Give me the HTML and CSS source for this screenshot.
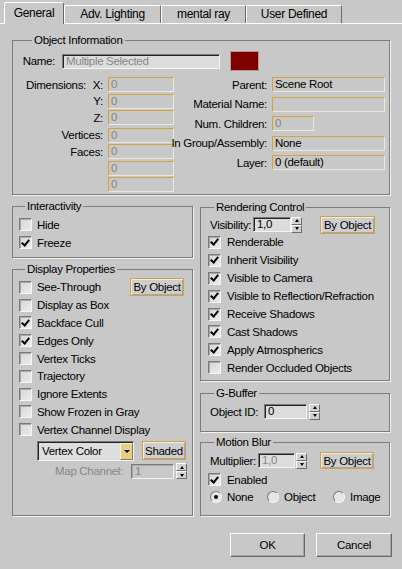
FILE: index.html
```html
<!DOCTYPE html>
<html lang="en">

<head>
    <meta charset="UTF-8">
    <meta name="viewport" content="width=device-width, initial-scale=1.0">
    <title>Object Properties</title>
    <link rel="stylesheet" href="styles.css">
</head>

<body>
    <div class="tabs">
        <div class="tab tab-general active">General</div>
        <div class="tab tab-adv">Adv. Lighting</div>
        <div class="tab tab-mr">mental ray</div>
        <div class="tab tab-user">User Defined</div>
    </div>

    <div class="panel">
        <fieldset class="group info">
            <legend>Object Information</legend>
            <div class="name-row">
                <span class="lbl name-label">Name:</span>
                <div class="field sunken name-field off">Multiple Selected</div>
                <div class="swatch"></div>
            </div>
            <div class="info-cols">
                <div class="dims">
                    <div class="dim-row"><span class="lbl split"><span>Dimensions:</span><span>X:</span></span><span class="field gold off">0</span></div>
                    <div class="dim-row"><span class="lbl">Y:</span><span class="field gold off">0</span></div>
                    <div class="dim-row"><span class="lbl">Z:</span><span class="field gold off">0</span></div>
                    <div class="dim-row sep"><span class="lbl">Vertices:</span><span class="field gold off">0</span></div>
                    <div class="dim-row"><span class="lbl">Faces:</span><span class="field gold off">0</span></div>
                    <div class="dim-row"><span class="lbl"></span><span class="field gold off">0</span></div>
                    <div class="dim-row"><span class="lbl"></span><span class="field gold off">0</span></div>
                </div>
                <div class="links">
                    <div class="link-row"><span class="lbl">Parent:</span><span class="field gold">Scene Root</span></div>
                    <div class="link-row"><span class="lbl">Material Name:</span><span class="field gold"></span></div>
                    <div class="link-row"><span class="lbl">Num. Children:</span><span class="field gold off short">0</span></div>
                    <div class="link-row"><span class="lbl">In Group/Assembly:</span><span class="field gold">None</span></div>
                    <div class="link-row"><span class="lbl">Layer:</span><span class="field gold">0 (default)</span></div>
                </div>
            </div>
        </fieldset>

        <div class="columns">
            <div class="col-left">
                <fieldset class="group interactivity">
                    <legend>Interactivity</legend>
                    <div class="chk-row"><span class="box"></span>Hide</div>
                    <div class="chk-row"><span class="box on"></span>Freeze</div>
                </fieldset>

                <fieldset class="group display">
                    <legend>Display Properties</legend>
                    <div class="chk-row tight"><span class="box"></span>See-Through<span class="btn-gold by-obj">By Object</span></div>
                    <div class="chk-row tight"><span class="box"></span>Display as Box</div>
                    <div class="chk-row tight"><span class="box on"></span>Backface Cull</div>
                    <div class="chk-row tight"><span class="box on"></span>Edges Only</div>
                    <div class="chk-row tight"><span class="box"></span>Vertex Ticks</div>
                    <div class="chk-row tight"><span class="box"></span>Trajectory</div>
                    <div class="chk-row tight"><span class="box"></span>Ignore Extents</div>
                    <div class="chk-row tight"><span class="box"></span>Show Frozen in Gray</div>
                    <div class="chk-row tight"><span class="box"></span>Vertex Channel Display</div>
                    <div class="vc-row">
                        <div class="select"><span>Vertex Color</span><i class="arrow"></i></div>
                        <span class="btn-gold shaded">Shaded</span>
                    </div>
                    <div class="map-row">
                        <span class="off">Map Channel:</span>
                        <span class="field flat off map-field">1</span>
                        <span class="spin"><i class="up"></i><i class="down"></i></span>
                    </div>
                </fieldset>
            </div>

            <div class="col-right">
                <fieldset class="group rendering">
                    <legend>Rendering Control</legend>
                    <div class="vis-row">
                        <span class="lbl vis-lbl">Visibility:</span>
                        <span class="field sunken num vis-field">1,0</span>
                        <span class="spin"><i class="up"></i><i class="down"></i></span>
                        <span class="btn-gold by-obj-r">By Object</span>
                    </div>
                    <div class="chk-row wide"><span class="box on"></span>Renderable</div>
                    <div class="chk-row wide"><span class="box on"></span>Inherit Visibility</div>
                    <div class="chk-row wide"><span class="box on"></span>Visible to Camera</div>
                    <div class="chk-row wide"><span class="box on"></span>Visible to Reflection/Refraction</div>
                    <div class="chk-row wide"><span class="box on"></span>Receive Shadows</div>
                    <div class="chk-row wide"><span class="box on"></span>Cast Shadows</div>
                    <div class="chk-row wide"><span class="box on"></span>Apply Atmospherics</div>
                    <div class="chk-row wide"><span class="box"></span>Render Occluded Objects</div>
                </fieldset>

                <fieldset class="group gbuffer">
                    <legend>G-Buffer</legend>
                    <div class="vis-row">
                        <span class="lbl id-lbl">Object ID:</span>
                        <span class="field sunken num id-field">0</span>
                        <span class="spin"><i class="up"></i><i class="down"></i></span>
                    </div>
                </fieldset>

                <fieldset class="group motion">
                    <legend>Motion Blur</legend>
                    <div class="vis-row mult-row">
                        <span class="lbl mult-lbl">Multiplier:</span>
                        <span class="field sunken num off mult-field">1,0</span>
                        <span class="spin"><i class="up"></i><i class="down"></i></span>
                        <span class="btn-gold by-obj-m">By Object</span>
                    </div>
                    <div class="chk-row wide"><span class="box on"></span>Enabled</div>
                    <div class="radio-row">
                        <span class="opt opt-none"><span class="radio on"></span>None</span>
                        <span class="opt opt-object"><span class="radio"></span>Object</span>
                        <span class="opt"><span class="radio"></span>Image</span>
                    </div>
                </fieldset>
            </div>
        </div>

        <div class="actions">
            <div class="btn ok">OK</div>
            <div class="btn cancel">Cancel</div>
        </div>
    </div>
</body>

</html>
```

FILE: styles.css
```css
* {
    margin: 0;
    padding: 0;
    box-sizing: border-box;
}

body {
    width: 402px;
    height: 569px;
    overflow: hidden;
    background: #c8c8c8;
    color: #000;
    font-family: "Liberation Sans", Arial, sans-serif;
    font-size: 11.5px;
    letter-spacing: -0.3px;
}

/* tab strip */
.tabs {
    display: flex;
    align-items: flex-end;
    height: 24px;
    padding-left: 4px;
    border-bottom: 1px solid #fff;
    font-size: 12px;
}

.tab {
    height: 18px;
    line-height: 16px;
    text-align: center;
    white-space: nowrap;
    border: 1px solid #fff;
    border-right-color: #6a6a6a;
    border-bottom: none;
    border-radius: 2px 2px 0 0;
}

.tab.active {
    height: 22px;
    line-height: 20px;
    margin-bottom: -1px;
    background: #c8c8c8;
}

.tab-general { width: 60px; }
.tab-adv { width: 97px; }
.tab-mr { width: 85px; }
.tab-user { width: 96px; }

.panel {
    padding: 10px 12px 0;
}

/* group boxes */
.group {
    min-width: 0;
    border: 1px solid #7c7c7c;
    box-shadow: 1px 1px 0 #f2f2f2;
}

.group legend {
    margin-left: 6px;
    padding: 0 2px;
    line-height: 13px;
}

.info {
    padding: 4px 3px 0 13px;
}

.name-row {
    display: flex;
    align-items: center;
    height: 20px;
}

.name-label {
    width: 29px;
    margin-right: 7px;
}

.name-field {
    width: 158px;
    height: 20px;
    line-height: 17px;
    padding-left: 4px;
}

.swatch {
    width: 29px;
    height: 20px;
    margin-left: 10px;
    background: #800000;
    border: 1px solid #b39a9a;
}

.info-cols {
    display: grid;
    grid-template-columns: 148px 1fr;
    margin-top: 6px;
}

.dim-row,
.link-row {
    display: flex;
    align-items: center;
    height: 15px;
}

.dim-row {
    margin-bottom: 1.5px;
}

.dim-row.sep {
    margin-top: 2.5px;
}

.link-row {
    margin-bottom: 4.5px;
}

.lbl {
    display: flex;
    justify-content: flex-end;
    white-space: nowrap;
}

.dim-row .lbl {
    width: 77px;
    margin-right: 5px;
}

.lbl.split {
    justify-content: space-between;
}

.link-row .lbl {
    width: 93px;
    margin-right: 5px;
}

/* edit fields */
.field {
    display: block;
    flex: none;
    height: 15px;
    line-height: 13px;
    padding-left: 2px;
    white-space: nowrap;
    overflow: hidden;
}

.dims .field { width: 66px; }
.links .field { width: 113px; }
.links .field.short { width: 42px; }

.gold {
    border: 1px solid;
    border-color: #d7a13c #eee8d8 #eee8d8 #d7a13c;
}

.sunken {
    border: 1px solid;
    border-color: #7a7a7a #f4f4f4 #f4f4f4 #7a7a7a;
    box-shadow: inset 1px 1px 0 #222;
    background: #dcdcdc;
    padding-left: 3px;
}

.flat {
    border: 1px solid;
    border-color: #7a7a7a #f4f4f4 #f4f4f4 #7a7a7a;
    box-shadow: inset 1px 1px 0 #a8a8a8;
    padding-left: 3px;
}

.off {
    color: #878787;
}

/* bottom columns */
.columns {
    display: grid;
    grid-template-columns: 181px 190px;
    column-gap: 7px;
    align-items: start;
    margin-top: 5px;
}

.col-right {
    padding-top: 1px;
}

.interactivity {
    padding: 3px 6px 5px;
}

.display {
    margin-top: 5px;
    padding: 3px 6px 36px;
}

.rendering {
    padding: 2px 7px 3px;
}

.gbuffer {
    margin-top: 6px;
    padding: 3px 7px 10px;
}

.motion {
    margin-top: 4px;
    padding: 2px 7px 10px;
}

/* check boxes */
.chk-row {
    display: flex;
    align-items: center;
    height: 18px;
    white-space: nowrap;
}

.chk-row.tight {
    height: 17.8px;
}

.chk-row.wide {
    height: 17.9px;
}

.box {
    display: flex;
    align-items: center;
    justify-content: center;
    flex: none;
    width: 13px;
    height: 13px;
    margin-right: 5px;
    border: 1px solid;
    border-color: #7a7a7a #f6f6f6 #f6f6f6 #7a7a7a;
    box-shadow: inset 1px 1px 0 #a9a9a9;
    background: linear-gradient(135deg, #d6d6d6, #ececec);
}

.wide .box {
    margin-right: 6px;
}

.box.on::after {
    content: "";
    width: 3px;
    height: 6px;
    margin-top: -2px;
    border: solid #000;
    border-width: 0 2px 2px 0;
    transform: rotate(40deg);
}

/* buttons */
.btn-gold {
    display: flex;
    align-items: center;
    justify-content: center;
    flex: none;
    height: 18px;
    border: 1px solid #d7a13c;
    background: #cecece;
    box-shadow: inset 1px 1px 0 #ececec, inset -1px -1px 0 #a6a6a6;
    white-space: nowrap;
}

.by-obj {
    width: 54px;
    margin-left: auto;
    margin-right: 2px;
}

.vc-row {
    display: flex;
    align-items: center;
    height: 20px;
    margin: 2px 0 0 18px;
}

.select {
    display: flex;
    width: 98px;
    height: 20px;
    border: 1px solid;
    border-color: #7a7a7a #f4f4f4 #f4f4f4 #7a7a7a;
    box-shadow: inset 1px 1px 0 #222;
    background: #dedede;
}

.select span {
    flex: 1;
    padding: 1px 0 0 4px;
    line-height: 17px;
}

.select .arrow {
    display: flex;
    align-items: center;
    justify-content: center;
    width: 13px;
    margin: 1px 0 0;
    border: 1px solid;
    border-color: #fff4d8 #8a7a50 #8a7a50 #fff4d8;
    background: #e8cf86;
}

.select .arrow::after {
    content: "";
    border-left: 3px solid transparent;
    border-right: 3px solid transparent;
    border-top: 3px solid #000;
}

.shaded {
    width: 44px;
    height: 19px;
    margin-left: 8px;
}

.map-row {
    display: flex;
    align-items: center;
    justify-content: flex-end;
    height: 15px;
    margin: 3px -1px 0 0;
}

.map-field {
    width: 43px;
    margin-left: 8px;
}

/* spinners */
.spin {
    display: flex;
    flex-direction: column;
    flex: none;
    width: 11px;
    height: 16px;
    margin-left: 2px;
}

.spin i {
    display: flex;
    align-items: center;
    justify-content: center;
    flex: 1;
    border: 1px solid;
    border-color: #fafafa #6e6e6e #6e6e6e #fafafa;
    background: #d2d2d2;
}

.spin .up::after {
    content: "";
    border-left: 2.5px solid transparent;
    border-right: 2.5px solid transparent;
    border-bottom: 3px solid #000;
}

.spin .down::after {
    content: "";
    border-left: 2.5px solid transparent;
    border-right: 2.5px solid transparent;
    border-top: 3px solid #000;
}

.vis-row {
    display: flex;
    align-items: center;
    height: 18px;
}

.vis-lbl {
    width: 43px;
    margin-left: 2px;
    justify-content: flex-start;
}

.vis-field {
    width: 38px;
}

.vis-row .spin {
    margin-left: 0;
}

.by-obj-r {
    width: 55px;
    margin-left: 18px;
}

.id-lbl {
    width: 54px;
    margin-left: 2px;
    justify-content: flex-start;
}

.id-field {
    width: 43px;
}

.gbuffer .spin {
    margin-left: 2px;
}

.mult-row {
    height: 20px;
}

.mult-lbl {
    width: 48px;
    margin-left: 2px;
    justify-content: flex-start;
}

.mult-field {
    width: 37px;
    color: #878787;
}

.mult-row .spin {
    margin-left: 1px;
}

.by-obj-m {
    width: 54px;
    height: 17px;
    margin-left: 13px;
}

/* radio buttons */
.radio-row {
    display: flex;
    align-items: center;
    height: 16px;
    padding-left: 2px;
}

.opt {
    display: flex;
    align-items: center;
    white-space: nowrap;
}

.opt-none { width: 57px; }
.opt-object { width: 66px; }

.radio {
    display: flex;
    align-items: center;
    justify-content: center;
    width: 12px;
    height: 12px;
    margin-right: 5px;
    border-radius: 50%;
    border: 1px solid;
    border-color: #7a7a7a #f6f6f6 #f6f6f6 #7a7a7a;
    background: #e6e6e6;
}

.radio.on::after {
    content: "";
    width: 4px;
    height: 4px;
    border-radius: 50%;
    background: #000;
}

/* dialog buttons */
.actions {
    display: flex;
    justify-content: flex-end;
    gap: 11px;
    margin: 17px -2px 0 0;
}

.btn {
    height: 24px;
    line-height: 22px;
    text-align: center;
    border: 1px solid;
    border-color: #fafafa #6a6a6a #6a6a6a #fafafa;
    box-shadow: inset -1px -1px 0 #a4a4a4;
}

.ok { width: 75px; }
.cancel { width: 76px; }
```
